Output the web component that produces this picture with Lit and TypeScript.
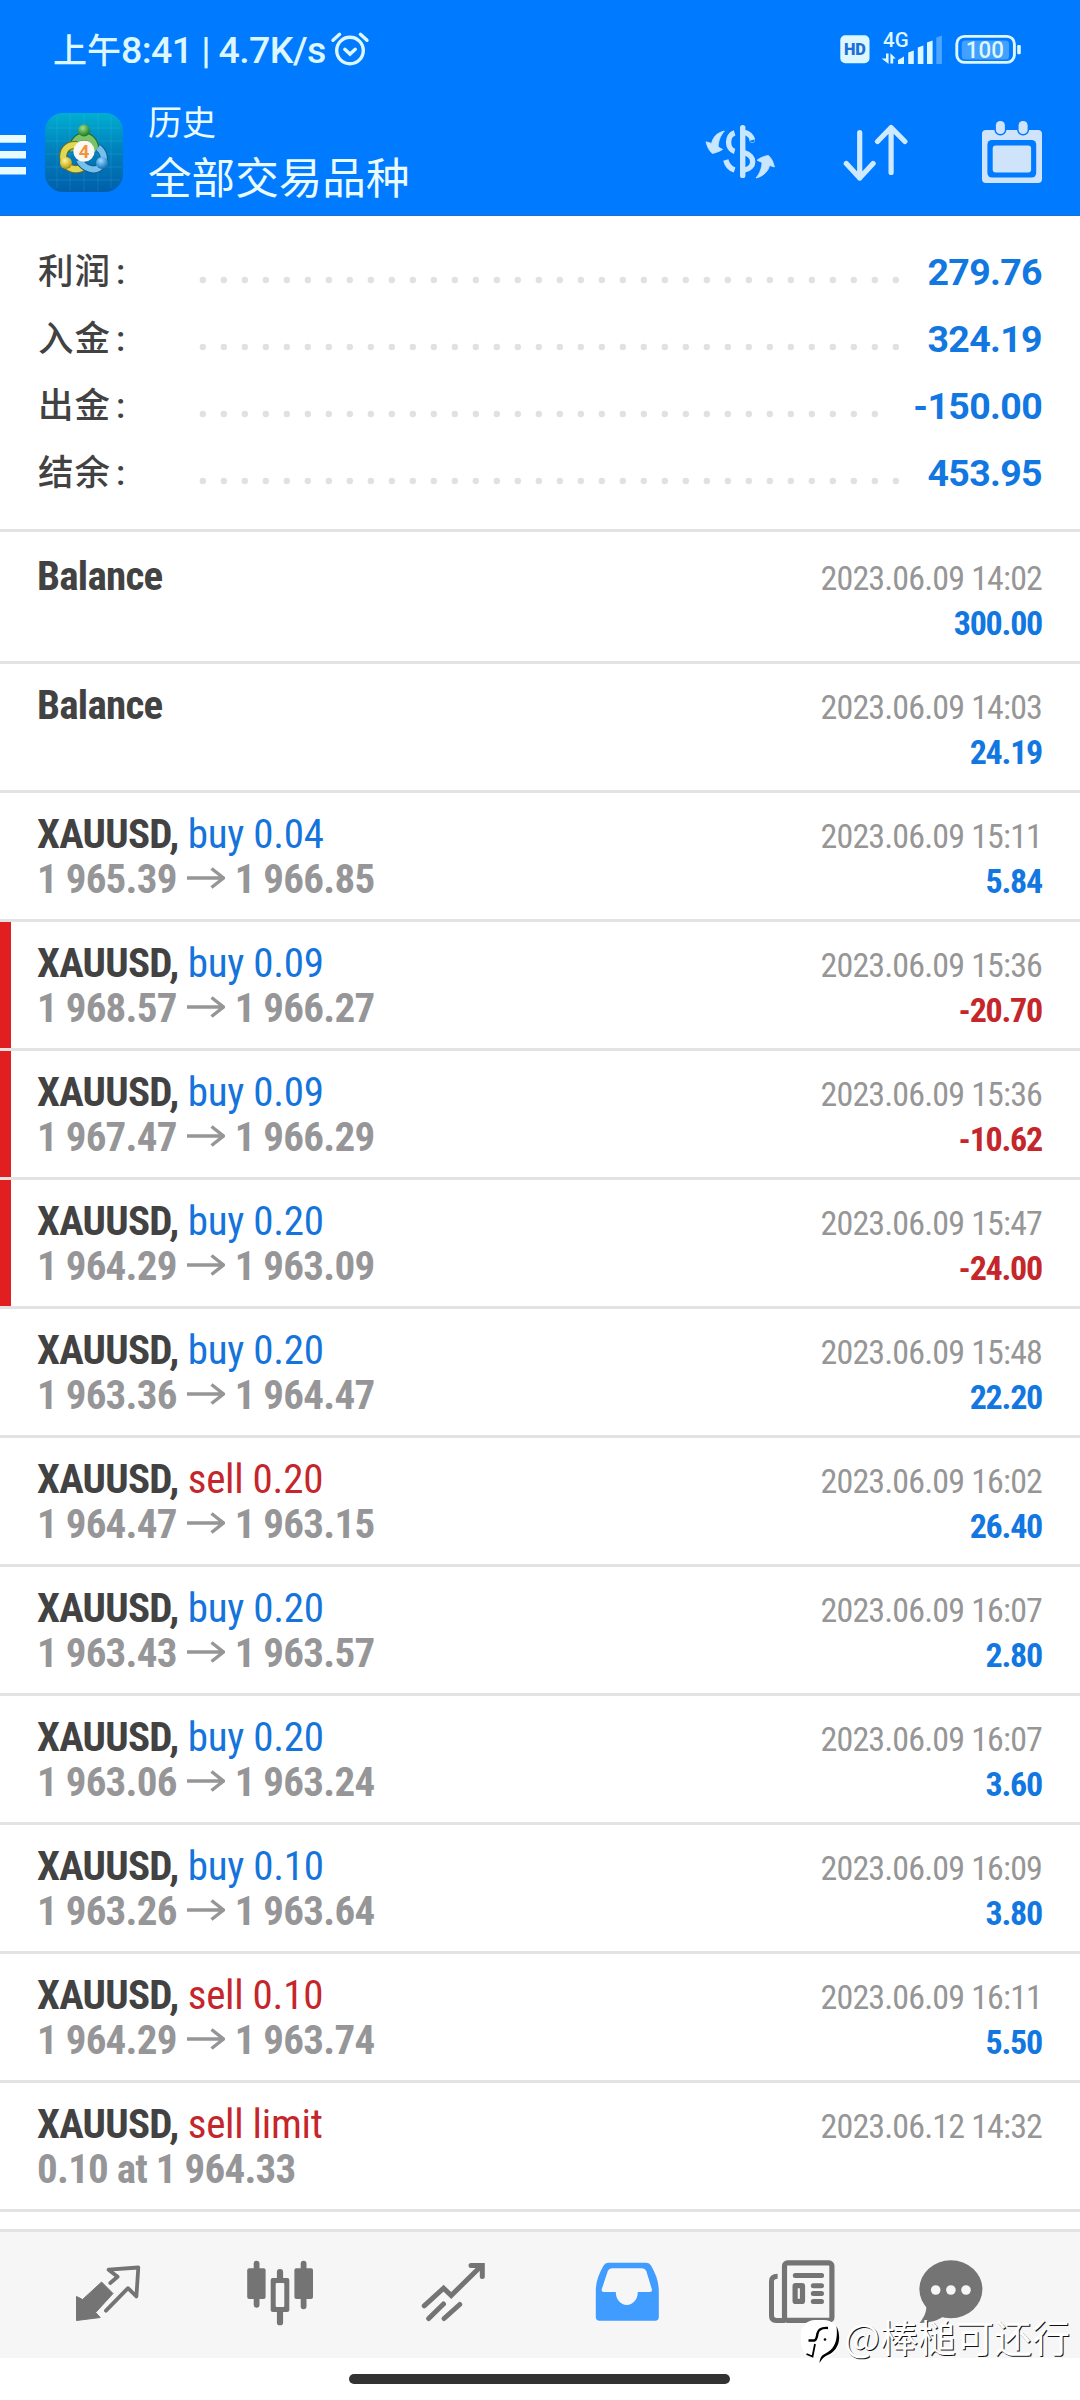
import { LitElement, html, svg, css, nothing } from "lit";
import { customElement, property } from "lit/decorators.js";

interface Deal {
  name: string;
  side?: "buy" | "sell";
  order?: string;
  from?: string;
  to?: string;
  note?: string;
  time: string;
  profit?: string;
  loss?: boolean;
}

const deals: Deal[] = [
  { name: "Balance", time: "2023.06.09 14:02", profit: "300.00" },
  { name: "Balance", time: "2023.06.09 14:03", profit: "24.19" },
  { name: "XAUUSD,", side: "buy", order: "buy 0.04", from: "1 965.39", to: "1 966.85", time: "2023.06.09 15:11", profit: "5.84" },
  { name: "XAUUSD,", side: "buy", order: "buy 0.09", from: "1 968.57", to: "1 966.27", time: "2023.06.09 15:36", profit: "-20.70", loss: true },
  { name: "XAUUSD,", side: "buy", order: "buy 0.09", from: "1 967.47", to: "1 966.29", time: "2023.06.09 15:36", profit: "-10.62", loss: true },
  { name: "XAUUSD,", side: "buy", order: "buy 0.20", from: "1 964.29", to: "1 963.09", time: "2023.06.09 15:47", profit: "-24.00", loss: true },
  { name: "XAUUSD,", side: "buy", order: "buy 0.20", from: "1 963.36", to: "1 964.47", time: "2023.06.09 15:48", profit: "22.20" },
  { name: "XAUUSD,", side: "sell", order: "sell 0.20", from: "1 964.47", to: "1 963.15", time: "2023.06.09 16:02", profit: "26.40" },
  { name: "XAUUSD,", side: "buy", order: "buy 0.20", from: "1 963.43", to: "1 963.57", time: "2023.06.09 16:07", profit: "2.80" },
  { name: "XAUUSD,", side: "buy", order: "buy 0.20", from: "1 963.06", to: "1 963.24", time: "2023.06.09 16:07", profit: "3.60" },
  { name: "XAUUSD,", side: "buy", order: "buy 0.10", from: "1 963.26", to: "1 963.64", time: "2023.06.09 16:09", profit: "3.80" },
  { name: "XAUUSD,", side: "sell", order: "sell 0.10", from: "1 964.29", to: "1 963.74", time: "2023.06.09 16:11", profit: "5.50" },
  { name: "XAUUSD,", side: "sell", order: "sell limit", note: "0.10 at 1 964.33", time: "2023.06.12 14:32" },
];

const totals = [
  { label: "利润", value: "279.76", dots: 34 },
  { label: "入金", value: "324.19", dots: 34 },
  { label: "出金", value: "-150.00", dots: 33 },
  { label: "结余", value: "453.95", dots: 34 },
];

@customElement("status-bar")
class StatusBar extends LitElement {
  static styles = css`
    :host { display: flex; height: 96px; color: #dcf7ff; font-family: Roboto, "Noto Sans CJK SC", sans-serif; padding-left: 53px; }
    .clock { display: flex; align-items: baseline; height: 40px; margin-top: 28px; line-height: 45px; font-size: 37.5px; font-weight: 500; letter-spacing: -0.6px; white-space: pre; width: 277px; }
    .cjk { font-size: 34px; letter-spacing: 0; }
    .alarm { width: 40px; height: 40px; margin-top: 30px; }
    .system { width: 186px; height: 40px; margin: 30px 54px 0 auto; overflow: visible; }
    svg { display: block; }
  `;
  render() {
    return html`
      <div class="clock"><span class="cjk">上午</span><span>8:41 | 4.7K/s</span></div>
      <svg class="alarm" viewBox="330 30 40 40" fill="none" stroke="#dcf7ff" stroke-width="3.4" stroke-linecap="round">
        <circle cx="350" cy="50.5" r="13.3" /><path d="M344.8 49.3l5.2 4.8 5.3-4.8M333 40.3l6.6-6M360.4 34.3l6.6 6" />
      </svg>
      <svg class="system" viewBox="840 30 186 40" fill="#dcf7ff" font-family="Roboto, sans-serif">
        <rect x="840.3" y="35.3" width="29.2" height="28" rx="5" />
        <text x="854.9" y="55.3" font-size="16" font-weight="900" text-anchor="middle" fill="#1c6fd6" textLength="22" lengthAdjust="spacingAndGlyphs">HD</text>
        <text x="883" y="47.3" font-size="20.5" font-weight="500">4G</text>
        <path d="M886 53.5h2.6v10.5l-7-5.6h4.4zM890.4 53.2l5.4 5.2h-2.6v5h-2.8z" />
        <path d="M898 60l6-3.6v7.6h-6zM908.2 52.5l5.6-2v13.5h-5.6zM917.8 47.5l5.6-2v18.5h-5.6zM927 42.5l5.6-2v23.5h-5.6z" />
        <path d="M936.3 37.5l5.6-2v28.5h-5.6z" opacity=".35" />
        <rect x="956.8" y="36.4" width="57.6" height="26" rx="7.5" fill="none" stroke="#dcf7ff" stroke-width="2.9" />
        <rect x="961.8" y="40.6" width="47.2" height="19" rx="3.5" opacity=".3" />
        <rect x="1017.2" y="45" width="3.6" height="9.2" rx="1.2" />
        <text x="984.8" y="58.4" font-size="24" font-weight="500" text-anchor="middle" textLength="38" lengthAdjust="spacingAndGlyphs">100</text>
      </svg>`;
  }
}

@customElement("title-bar")
class TitleBar extends LitElement {
  static styles = css`
    :host { display: flex; height: 119px; color: #e9fbff; }
    svg { display: block; flex: none; }
    .menu { width: 26px; height: 40px; margin-top: 39px; }
    .logo { width: 78px; height: 79px; margin: 17px 0 0 19px; }
    .titles { margin-left: 25px; font-family: "Noto Sans CJK SC", sans-serif; }
    .sub { font-size: 34px; line-height: 36px; margin-top: 7px; }
    .main { font-size: 43.6px; line-height: 48px; margin-top: 12px; }
    .exchange { width: 70px; height: 56px; margin: 28px 0 0 auto; }
    .sort { width: 66px; height: 58px; margin: 28px 0 0 68px; }
    .calendar { width: 62px; height: 64px; margin: 24px 37px 0 72px; }
  `;
  render() {
    return html`
      <svg class="menu" viewBox="0 0 26 40" fill="#e9fbff"><path d="M0 0h26v7.8H0zM0 16h26v7.6H0zM0 32h26v7.4H0z" /></svg>
      <svg class="logo" viewBox="0 0 78 79">
        <defs>
          <linearGradient id="tile" x1="0" y1="0" x2="0" y2="1"><stop offset="0" stop-color="#00aed0" /><stop offset=".45" stop-color="#0082bd" /><stop offset="1" stop-color="#005faa" /></linearGradient>
          <radialGradient id="green" cx=".4" cy=".3" r=".8"><stop offset="0" stop-color="#a8dc8c" /><stop offset=".6" stop-color="#3c9a3e" /><stop offset="1" stop-color="#14621f" /></radialGradient>
          <radialGradient id="gold" cx=".4" cy=".3" r=".8"><stop offset="0" stop-color="#fff3a0" /><stop offset=".6" stop-color="#d3b92b" /><stop offset="1" stop-color="#8a7312" /></radialGradient>
          <radialGradient id="azure" cx=".4" cy=".3" r=".8"><stop offset="0" stop-color="#a5dcff" /><stop offset=".6" stop-color="#3b94d4" /><stop offset="1" stop-color="#115b9b" /></radialGradient>
        </defs>
        <rect width="78" height="79" rx="18" fill="url(#tile)" />
        <path d="M12 4v71M25 1v77M39 1v77M53 1v77M66 4v71M3 15h72M1 28h76M1 41h76M1 54h76M3 67h72" stroke="#7fe0ff" stroke-opacity=".13" fill="none" />
        <g fill="none">
          <path d="M28.500 38a10.800 11.500 0 1 1 21 0" stroke="#1b6b2a" stroke-width="8.600" />
          <path d="M28.500 38a10.800 11.500 0 1 1 21 0" stroke="#7cc268" stroke-width="6.400" />
          <path d="M32 32c-11-1-15 7-13.500 15 2.500 9 14 12.500 21.500 5.500" stroke="#7c6a13" stroke-width="8" />
          <path d="M32 32c-11-1-15 7-13.500 15 2.500 9 14 12.500 21.500 5.500" stroke="#e0d850" stroke-width="6" />
          <path d="M34 47c5 9 17 13 23 5 3.500-6 2-13-4-17.500" stroke="#125a96" stroke-width="8" />
          <path d="M34 47c5 9 17 13 23 5 3.500-6 2-13-4-17.500" stroke="#76c0ec" stroke-width="6" />
        </g>
        <circle cx="39" cy="17.500" r="6" fill="url(#green)" />
        <circle cx="21" cy="50" r="6" fill="url(#gold)" />
        <circle cx="57" cy="50" r="6" fill="url(#azure)" />
        <circle cx="39" cy="38.200" r="10.600" fill="#fbf7f2" />
        <text x="39" y="45" text-anchor="middle" font-family="Roboto, sans-serif" font-weight="700" font-size="18.500" fill="#f0943e">4</text>
      </svg>
      <div class="titles"><div class="sub">历史</div><div class="main">全部交易品种</div></div>
      <svg class="exchange" viewBox="705 124 70 56" fill="#c9e6ff">
        <rect x="740" y="125" width="5.400" height="53" rx="2.600" />
        <g fill="none" stroke="#c9e6ff" stroke-width="5.400">
          <path d="M734.600 132.800c-8 2.500-8 16.500 0 18.500" /><path d="M725.800 160c1.400 5.500 4 8.500 8.800 10" />
          <path d="M744.500 132.400c4.500 1 6.700 3.300 8 7.600M744 152.600c11.600 3 11.600 15.400 0 17.600" />
          <circle cx="752.200" cy="139.800" r=".2" />
        </g>
        <path d="M724.400 131c-7 1.500-11.400 5.800-12.800 12.400l-5.600-1.600c1.200 5 3 8.600 6.200 11.600 3.600-.6 7-1.800 10.400-4l-4.400-2.400c.2-6.400 2-11 6.200-16z" stroke="#c9e6ff" stroke-width=".8" />
        <path d="M756 178c7-1.500 12.200-6.600 13.600-12.600l4.800 1.600c-1-5-2.800-8.600-6-11.600-4 .6-7.600 2-11.400 4.800l5 2.200c-.4 6-2 10.600-6 15.600z" stroke="#c9e6ff" stroke-width=".8" />
      </svg>
      <svg class="sort" viewBox="843.5 124 66 58" fill="none" stroke="#cfeaff" stroke-width="5.200" stroke-linecap="round" stroke-linejoin="round">
        <path d="M860.2 132.500v45.500M846.800 163.500l13.400 14.500 13.400-14.500M891.600 172.500v-45M878 141.500l13.600-14 13.800 14" />
      </svg>
      <svg class="calendar" viewBox="981 120 62 64" fill="#cfe3fb">
        <rect x="982" y="130" width="60" height="53" rx="4" />
        <rect x="987.4" y="140" width="48.8" height="37.5" rx="4.5" fill="#007aff" />
        <rect x="992.7" y="145.6" width="38.4" height="26.8" rx="3" />
        <g stroke="#007aff" stroke-width="3" paint-order="stroke"><rect x="995.9" y="121" width="9" height="13" rx="4.3" /><rect x="1018.6" y="121" width="9" height="13" rx="4.3" /></g>
      </svg>`;
  }
}

@customElement("totals-panel")
class TotalsPanel extends LitElement {
  static styles = css`
    :host { display: block; height: 313px; padding: 21px 38px 0 38px; box-sizing: border-box; }
    .line { display: flex; height: 67px; }
    .label { width: 161px; font-family: Roboto, "Noto Sans CJK SC", sans-serif; font-size: 35.5px; line-height: 71px; letter-spacing: 1px; font-weight: 500; color: #424242; }
    .colon { margin-left: 5px; }
    .dots { display: block; height: 8px; margin-top: 38.5px; }
    .value { margin-left: auto; font: 700 37.5px/71px Roboto, sans-serif; letter-spacing: -0.65px; color: #1277e1; }
  `;
  render() {
    return totals.map(
      (t) => html`<div class="line">
        <span class="label">${t.label}<span class="colon">:</span></span>
        <svg class="dots" width=${t.dots * 21} height="8" fill="#e1e1e1">
          ${Array.from({ length: t.dots }, (_, i) => svg`<circle cx=${3.8 + i * 21} cy="4" r="3.2" />`)}
        </svg>
        <span class="value">${t.value}</span>
      </div>`
    );
  }
}

@customElement("deal-row")
class DealRow extends LitElement {
  @property({ attribute: false }) deal!: Deal;
  static styles = css`
    :host { display: block; border-bottom: 3px solid #e3e3e3; }
    .row { display: flex; justify-content: space-between; height: 126px; box-sizing: border-box; padding: 16px 38px 0 37px; font-family: "Roboto Condensed", Roboto, sans-serif; font-stretch: 75%; }
    .loss { border-left: 11px solid #e21f20; padding-left: 26px; }
    .title { font-size: 41px; line-height: 50px; color: #424242; height: 45px; white-space: pre; letter-spacing: -0.25px; }
    .name { font-weight: 700; letter-spacing: -0.75px; }
    .buy { color: #1574dc; }
    .sell { color: #c4262b; }
    .prices { display: flex; font-size: 41px; font-weight: 700; line-height: 50px; letter-spacing: -0.75px; color: #969698; white-space: pre; }
    .arrow { width: 38px; height: 22px; margin: 13px 10px 0; }
    .side { text-align: right; }
    .time { font-size: 34px; line-height: 45px; margin-top: 5px; letter-spacing: -0.85px; color: #969696; }
    .profit { font-size: 34px; line-height: 45px; letter-spacing: -1.25px; font-weight: 700; color: #1277e1; }
    .neg { color: #c4262b; }
  `;
  render() {
    const d = this.deal;
    return html`<div class="row ${d.loss ? "loss" : ""}">
      <div>
        <div class="title"><span class="name">${d.name}</span>${d.order ? html` <span class=${d.side!}>${d.order}</span>` : nothing}</div>
        ${d.from
          ? html`<div class="prices"><span>${d.from}</span><svg class="arrow" viewBox="0 0 38 22" fill="none" stroke="#969698" stroke-width="3.4"><path d="M0 11h36M24.500 1.500l12 9.500-12 9.500" /></svg><span>${d.to}</span></div>`
          : html`<div class="prices">${d.note ?? ""}</div>`}
      </div>
      <div class="side"><div class="time">${d.time}</div><div class="profit ${d.loss ? "neg" : ""}">${d.profit ?? ""}</div></div>
    </div>`;
  }
}

@customElement("tab-bar")
class TabBar extends LitElement {
  static styles = css`
    :host { display: flex; height: 129px; box-sizing: border-box; border-top: 3px solid #e3e3e3; background: #f6f6f6; padding: 25px 0 0 70px; }
    svg { display: block; flex: none; width: 74px; height: 70px; }
    .chart { margin-left: 99px; }
    .trade { margin-left: 99px; }
    .history { margin-left: 100px; }
    .news { margin-left: 99px; }
    .chat { margin-left: 74px; }
  `;
  render() {
    return html`
      <svg viewBox="70 2257 74 70" fill="#747474">
        <path d="M76.5 2296.500l6.100 3 19-17.500 11.400 11.500-17.300 19 4.500 5-23.700 3z" stroke="#747474" stroke-linejoin="round" />
        <path d="M110.300 2283l7.300-6.300-9-7 29.700-2.200-1.900 29-8.400-8.300-22 22.500" fill="none" stroke="#747474" stroke-width="3.800" stroke-linejoin="round" stroke-linecap="round" />
      </svg>
      <svg class="chart" viewBox="243 2257 74 70" fill="#747474">
        <rect x="253.700" y="2260.700" width="5.800" height="47" rx="2.900" /><rect x="247.200" y="2268.300" width="18.400" height="30.700" rx="2" />
        <rect x="300.700" y="2260.700" width="5.800" height="48.500" rx="2.900" /><rect x="294.400" y="2268.300" width="18.600" height="30.700" rx="2" />
        <rect x="276.900" y="2269" width="6.200" height="56.300" rx="2.900" /><rect x="270.700" y="2278" width="18.600" height="34" rx="2" />
        <rect x="275.700" y="2283" width="8.600" height="24" rx="1" fill="#f6f6f6" />
      </svg>
      <svg class="trade" viewBox="416 2257 74 70" fill="none" stroke="#747474" stroke-width="5" stroke-linecap="round">
        <path d="M424.200 2305.800l19.400-17.600 7.600 7.300 29.500-29" stroke-linejoin="miter" /><path d="M471 2265.500h11.300v11M443.500 2304l-14.800 14.500M459.700 2304.500l-15.600 14" />
      </svg>
      <svg class="history" viewBox="590 2257 74 70">
        <path fill="#409cff" fill-rule="evenodd" d="M609 2262.700h37.500q3 0 4.500 2.800c5 9 7.800 16 7.800 25.500v26q0 3.700-3.700 3.700h-55.600q-3.700 0-3.700-3.700v-26c0-9.500 2.800-16.500 7.800-25.500q1.500-2.800 4.500-2.800zM612 2268.300q-3 0-4.200 2.800l-6 18q-.8 3 2 3h12c0 7.500 5 13 11 13s11-5.500 11-13h12q2.800 0 2-3l-5.500-18q-1.200-2.800-4.200-2.800z" />
      </svg>
      <svg class="news" viewBox="763 2257 74 70" fill="none" stroke="#747474">
        <rect x="784.500" y="2262.900" width="47.400" height="57.500" rx="3" stroke-width="5.200" />
        <path d="M777.600 2276.300q-6.100 0-6.100 5v34.500q0 4.600 4.600 4.600h9" stroke-width="5" />
        <path d="M795.300 2275.400h26.300M813.300 2285.800h8.200M813.300 2293.600h8.200M813.300 2301.400h8.200" stroke-width="5" stroke-linecap="round" />
        <rect x="795.100" y="2285.700" width="7.400" height="15.700" rx=".5" stroke-width="5.200" />
      </svg>
      <svg class="chat" viewBox="911 2257 74 70" fill="#747474">
        <ellipse cx="950.900" cy="2289.200" rx="31.500" ry="29" /><path d="M926 2303c1.500 7-1.500 14-6.500 20 11 0 20-3 26-8z" />
        <g fill="#f6f6f6"><circle cx="935.700" cy="2290" r="4.800" /><circle cx="950.900" cy="2290" r="4.800" /><circle cx="966" cy="2290" r="4.800" /></g>
      </svg>`;
  }
}

@customElement("app-root")
class AppRoot extends LitElement {
  static styles = css`
    :host { display: block; position: relative; width: 1080px; height: 2400px; background: #fff; overflow: hidden; }
    .top { background: #007aff; height: 216px; box-sizing: border-box; border-bottom: 1px solid #1a6fd0; }
    .list { border-top: 3px solid #e3e3e3; padding-top: 3px; margin-bottom: 17px; }
    .home { width: 381px; height: 10px; border-radius: 5px; background: #323232; margin: 16px 0 0 349px; }
    .mark { position: absolute; right: 10px; top: 2314px; display: flex; color: #fff; font: 400 38px/44px "Noto Sans CJK SC", sans-serif; text-shadow: 1px 1px 0 #111; }
    .badge { width: 40px; height: 48px; margin: 5px 3px 0 0; }
  `;
  render() {
    return html`
      <div class="top"><status-bar></status-bar><title-bar></title-bar></div>
      <totals-panel></totals-panel>
      <div class="list">${deals.map((deal) => html`<deal-row .deal=${deal}></deal-row>`)}</div>
      <tab-bar></tab-bar>
      <div class="home"></div>
      <div class="mark">
        <svg class="badge" viewBox="0 0 40 48">
          <rect x="0" y="1" width="37" height="37" rx="14" fill="#fff" />
          <g fill="none" stroke="#000">
            <path d="M27 9c-6-.5-9.500.5-10.500 5.500-.5 3.500-1 6-3 7h-6" stroke-width="2.400" />
            <path d="M14 25l-2.500 12.500-6-2.500" stroke-width="1.800" />
          </g>
          <path d="M35.500 7c5 11 3 22-6.500 28-5 2-6.500 3-10.500 9 .5-5 2-8 6-9.500C34 30 37 21 35.500 7z" fill="#000" />
          <circle cx="24" cy="20.500" r="1.300" fill="#000" />
        </svg><span>@棒槌可还行</span>
      </div>`;
  }
}
